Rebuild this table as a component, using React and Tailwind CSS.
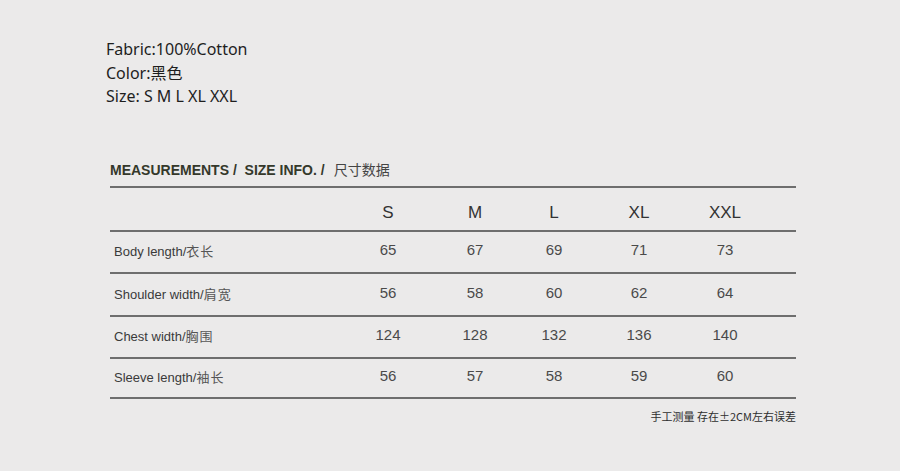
import React from "react";

const cols = ["S", "M", "L", "XL", "XXL"];
const rows = [
  { en: "Body length/", zh: "衣长", vals: [65, 67, 69, 71, 73], h: "h-[42px]" },
  { en: "Shoulder width/", zh: "肩宽", vals: [56, 58, 60, 62, 64], h: "h-[43px]" },
  { en: "Chest width/", zh: "胸围", vals: [124, 128, 132, 136, 140], h: "h-[42px]" },
  { en: "Sleeve length/", zh: "袖长", vals: [56, 57, 58, 59, 60], h: "h-[40px]" },
];

const grid = "grid grid-cols-[235px_86px_88px_70px_100px_72px_35px]";

export default function App() {
  return (
    <div className="w-[900px] h-[471px] bg-[#ebeaea] overflow-hidden">
      <div className="pt-[38px] pl-[106px] text-[16px] leading-[23.5px] text-[#1e1e1e] font-['Noto_Sans','Noto_Sans_CJK_SC',sans-serif]">
        <div>Fabric:100%Cotton</div>
        <div>Color:黑色</div>
        <div>Size: S M L XL XXL</div>
      </div>
      <div className="ml-[110px] w-[686px]">
        <div className="mt-[51px] h-[18px] leading-[18px] flex items-baseline font-['Liberation_Sans','Noto_Sans_CJK_SC',sans-serif]">
          <span className="text-[14px] font-bold text-[#34382a]">MEASUREMENTS /&nbsp;&nbsp;SIZE INFO. /</span>
          <span className="ml-[9px] text-[14px] text-[#444] font-['Noto_Sans_CJK_SC',sans-serif]">尺寸数据</span>
        </div>
        <div className="mt-[8px] border-t-2 border-[#6e6e6e] font-['Liberation_Sans','Noto_Sans_CJK_SC',sans-serif]">
          <div className={`${grid} h-[44px] items-center border-b-2 border-[#6e6e6e] text-[17px] text-[#333] pt-[8px]`}>
            <div></div>
            {cols.map((c) => (
              <div key={c} className="text-center">{c}</div>
            ))}
            <div></div>
          </div>
          {rows.map((r) => (
            <div key={r.en} className={`${grid} ${r.h} items-center border-b-2 border-[#6e6e6e]`}>
              <div className="pl-[4px] flex items-baseline">
                <span className="text-[13px] text-[#3a3a3a]">{r.en}</span>
                <span className="text-[13px] text-[#555] tracking-[1px] font-['Noto_Sans_CJK_SC',sans-serif]">{r.zh}</span>
              </div>
              {r.vals.map((v, i) => (
                <div key={i} className="text-center text-[15px] text-[#4a4a4a] pb-[2px]">{v}</div>
              ))}
              <div></div>
            </div>
          ))}
        </div>
        <div className="mt-[9px] text-right text-[11px] leading-[16px] text-[#2e2e2e] font-['Noto_Sans_CJK_SC',sans-serif]">
          手工测量 存在±2CM左右误差
        </div>
      </div>
    </div>
  );
}
